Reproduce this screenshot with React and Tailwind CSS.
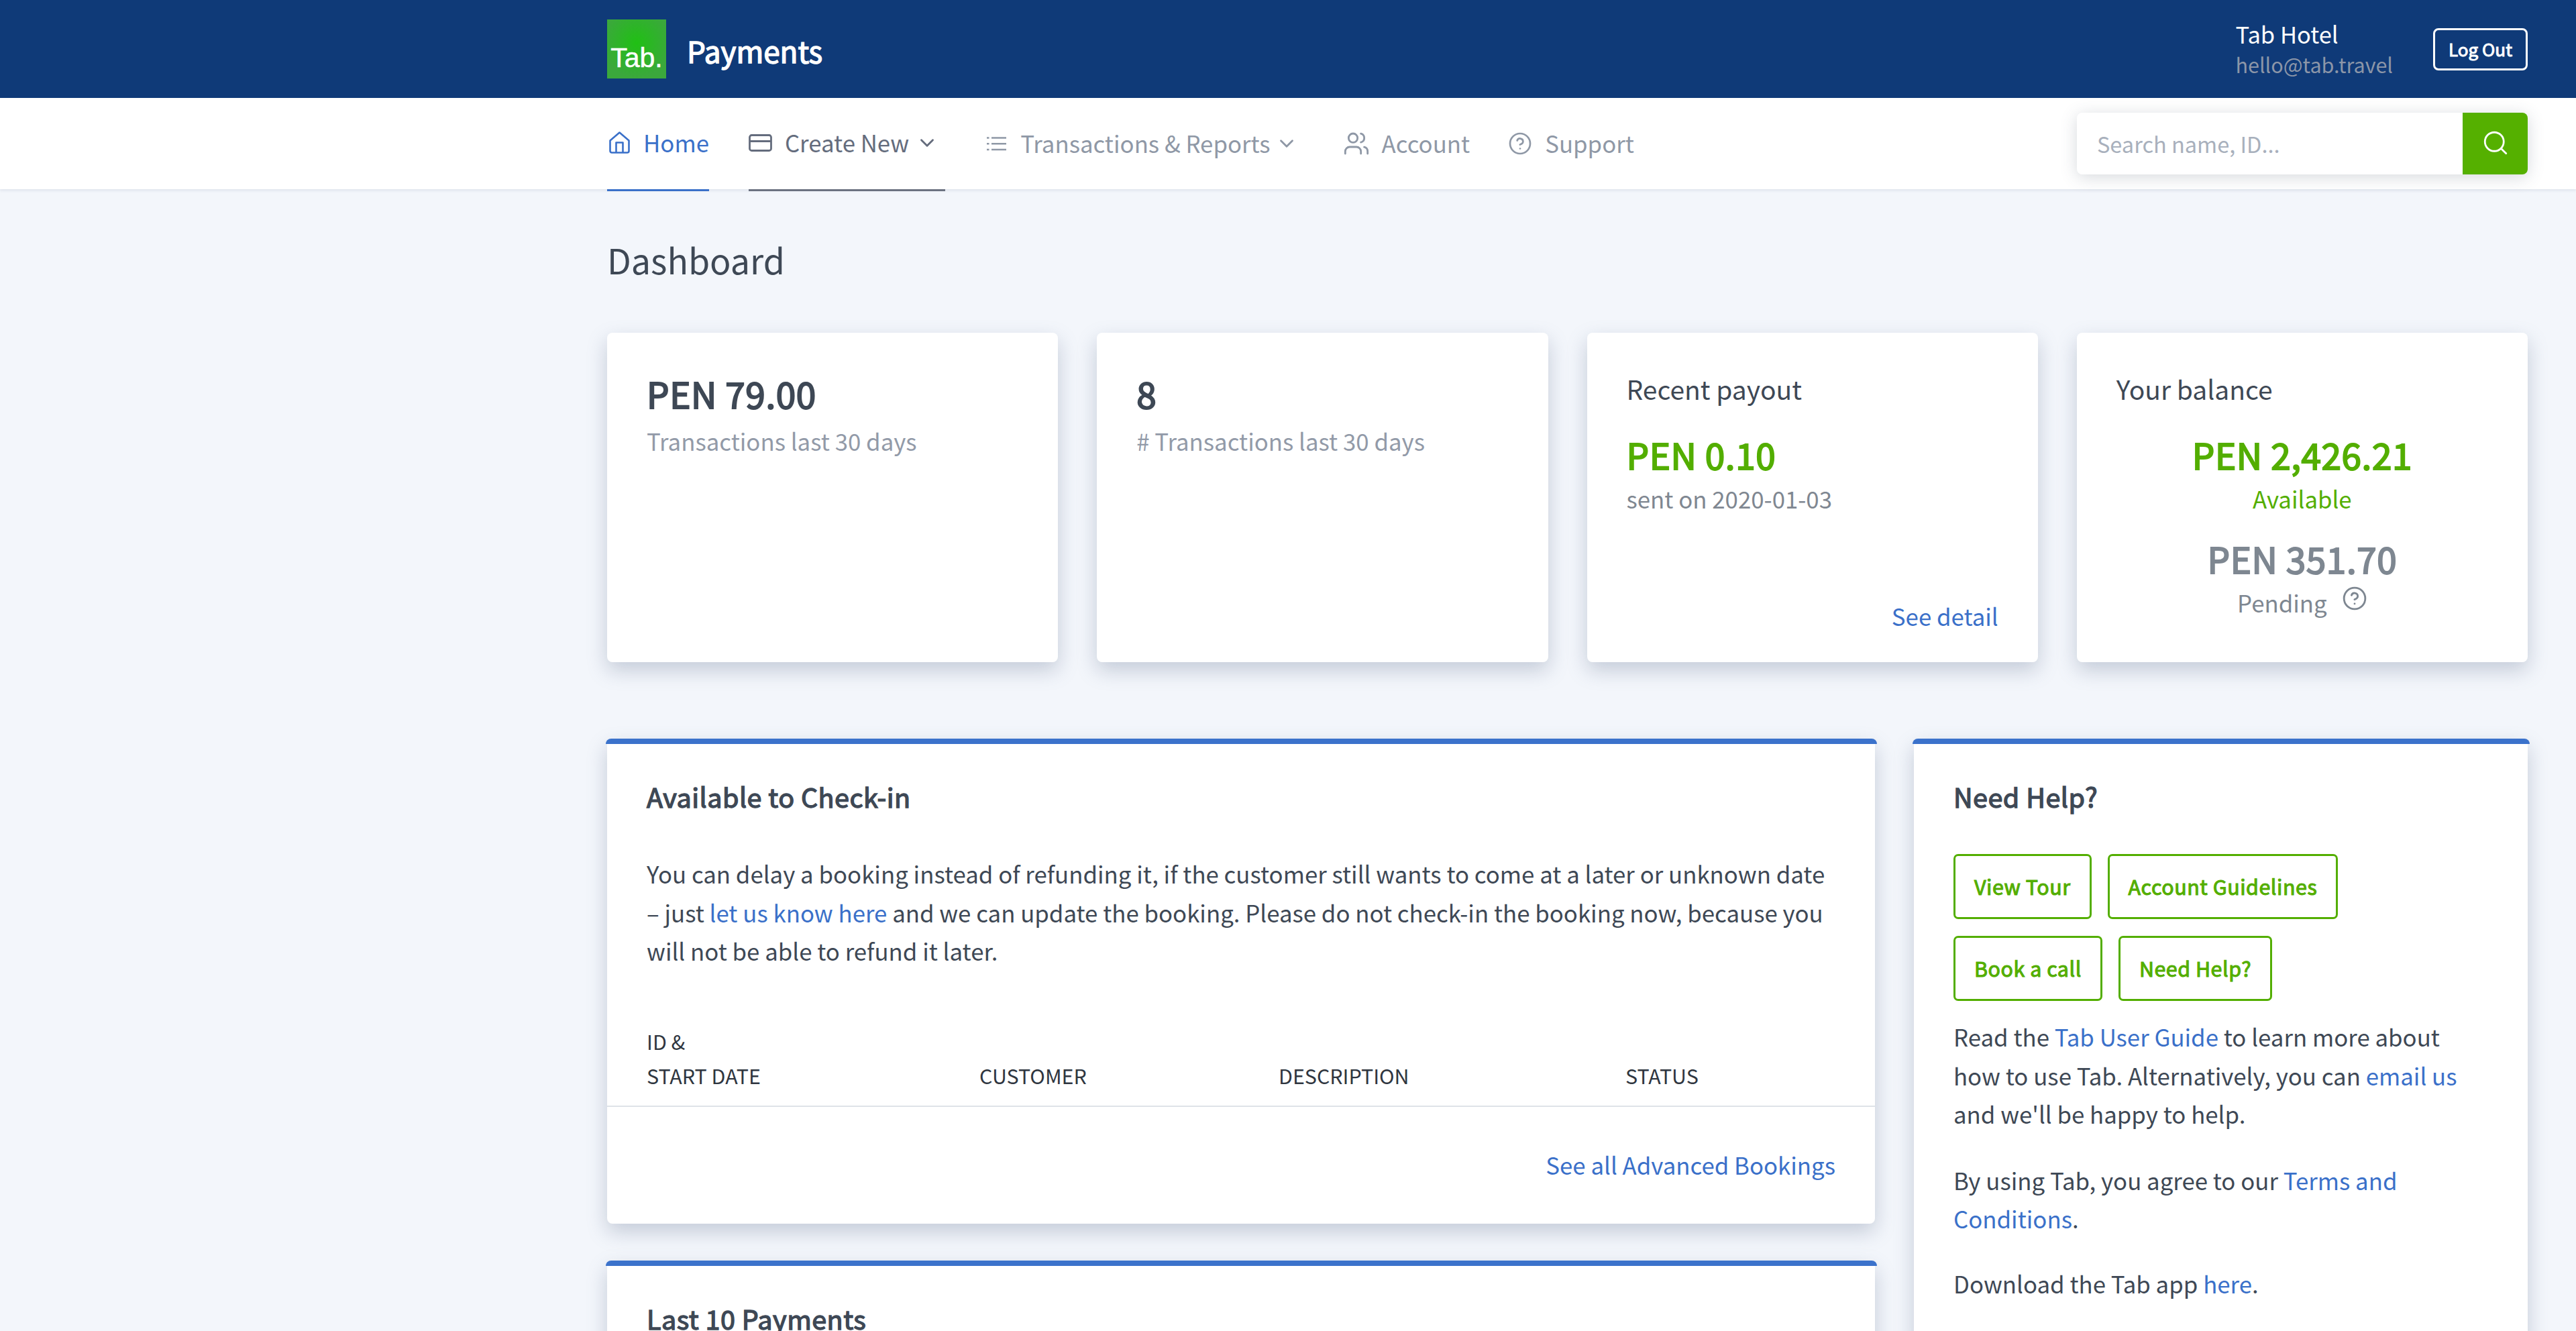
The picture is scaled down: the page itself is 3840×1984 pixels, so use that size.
import React from 'react';
import { ChevronDown, Search, Users, HelpCircle } from 'lucide-react';

function HomeIcon() {
  return (
    <svg width="31" height="33" viewBox="0 0 31 33" fill="none" stroke="currentColor" strokeWidth="2.6" strokeLinejoin="round">
      <path d="M1.5 13.5 15.5 1.5l14 12v15.5a2.5 2.5 0 0 1-2.5 2.5H4a2.5 2.5 0 0 1-2.5-2.5z" />
      <path d="M10.5 31.5V16.5h10v15" />
    </svg>
  );
}

function CardIcon() {
  return (
    <svg width="35" height="26" viewBox="0 0 35 26" fill="none" stroke="currentColor" strokeWidth="2.8">
      <rect x="1.5" y="1.5" width="32" height="23" rx="3" />
      <path d="M1.5 10.5h32" />
    </svg>
  );
}

function ListIcon() {
  return (
    <svg width="29" height="24" viewBox="0 0 29 24" fill="none" stroke="currentColor" strokeWidth="2.6">
      <path d="M7 3.5h22M7 12.2h22M7 21h22" />
      <path d="M0 3.5h3.5M0 12.2h3.5M0 21h3.5" />
    </svg>
  );
}

function NavItem({ icon, label, chevron, className }) {
  return (
    <a className={`flex h-[139px] items-center pb-[3px] ${className}`}>
      {icon}
      <span>{label}</span>
      {chevron}
    </a>
  );
}

function Panel({ title, children }) {
  return (
    <div className="relative rounded-[8px] bg-white pt-[56px] shadow-[0_12px_30px_rgba(100,115,145,0.33)]">
      <div className="absolute -inset-x-[2.5px] top-0 h-[8px] rounded-t-[8px] bg-[#3b72cb]"></div>
      <h2 className="px-[59px] text-[39.5px] leading-[60px] tracking-[0.5px] [-webkit-text-stroke:1.4px_currentColor]">{title}</h2>
      {children}
    </div>
  );
}

function OutlineButton({ children }) {
  return (
    <a className="flex h-[97px] items-center rounded-[7px] border-[3px] border-[#53ae00] px-[28px] text-[30.4px] tracking-[0.55px] text-[#53ae00] [-webkit-text-stroke:1.1px_currentColor]">
      {children}
    </a>
  );
}

function Link({ children }) {
  return <a className="text-[#3a70c9]">{children}</a>;
}

const card = 'flex h-[491px] flex-col rounded-[8px] bg-white shadow-[0_12px_30px_rgba(100,115,145,0.33)]';
const amount = 'text-[53px] leading-[72px] tracking-[0.6px] [-webkit-text-stroke:2px_currentColor]';

export default function App() {
  return (
    <div className="h-[1984px] overflow-hidden bg-[#f3f6fb] font-['Noto_Sans_CJK_SC',sans-serif] text-[34.8px] leading-[57.6px] text-[#3e4855]">
      <header className="flex h-[146px] items-center justify-between bg-[#0f3a78] pr-[72px] pl-[905px]">
        <div className="flex items-center gap-[31px]">
          <div className="flex h-[88px] w-[88px] items-end justify-center bg-[radial-gradient(circle_at_50%_40%,#20c014,#3ba83c_75%)] pb-[9px] font-['Liberation_Sans',sans-serif] text-[41px] leading-[44px] text-white [-webkit-text-stroke:0.5px_white]">
            Tab.
          </div>
          <span className="mt-[6px] text-[44px] text-white [-webkit-text-stroke:1.4px_white]">Payments</span>
        </div>
        <div className="flex items-center gap-[60px]">
          <div>
            <div className="text-[34.5px] leading-[46px] text-white">Tab Hotel</div>
            <div className="text-[30.5px] leading-[46px] text-[#8c96a8]">hello@tab.travel</div>
          </div>
          <button className="h-[63px] w-[141px] rounded-[8px] border-[3px] border-white text-[26px] leading-none text-white [-webkit-text-stroke:1px_white]">
            Log Out
          </button>
        </div>
      </header>

      <nav className="relative flex h-[136px] items-start justify-between bg-white pr-[72px] pl-[905px] shadow-[0_2px_4px_rgba(100,115,145,0.15)]">
        <div className="flex gap-[59px] text-[#8f98a6]">
          <NavItem icon={<HomeIcon />} label="Home" className="gap-[20px] border-b-[3px] border-[#3a70c9] pl-[3px] text-[#3a70c9]" />
          <NavItem
            icon={<CardIcon />}
            label="Create New"
            chevron={<ChevronDown size={34} strokeWidth={2} className="ml-[-9.5px]" />}
            className="gap-[19px] border-b-[3px] border-[#6b7280] pr-[10.5px] text-[#646c7d]"
          />
          <NavItem
            icon={<ListIcon />}
            label="Transactions & Reports"
            chevron={<ChevronDown size={34} strokeWidth={2} className="ml-[-13.5px]" />}
            className="ml-[3px] gap-[21px] pr-[10.5px]"
          />
          <NavItem icon={<Users size={40} strokeWidth={1.7} />} label="Account" className="ml-[-3px] gap-[18px]" />
          <NavItem icon={<HelpCircle size={36} strokeWidth={1.8} />} label="Support" className="ml-[-2px] gap-[19px]" />
        </div>
        <div className="mt-[22px] flex h-[92px] w-[672px] rounded-[8px] bg-white shadow-[0_4px_24px_rgba(70,80,100,0.22)]">
          <input
            placeholder="Search name, ID..."
            className="min-w-0 flex-1 pl-[30px] text-[32.5px] outline-none placeholder:text-[#a8b0bc]"
          />
          <button className="flex w-[97px] items-center justify-center rounded-r-[8px] bg-[#55b000] pb-[2px] text-white">
            <Search size={42} strokeWidth={1.6} />
          </button>
        </div>
      </nav>

      <main className="pr-[72px] pl-[905px]">
        <h1 className="pt-[69px] text-[52px] leading-[72px]">Dashboard</h1>

        <div className="mt-[73px] grid grid-cols-4 gap-[58px]">
          <div className={`${card} px-[59px] pt-[54px]`}>
            <div className={amount}>PEN 79.00</div>
            <div className="mt-[7px] text-[#929aa8]">Transactions last 30 days</div>
          </div>
          <div className={`${card} px-[59px] pt-[54px]`}>
            <div className={amount}>8</div>
            <div className="mt-[7px] text-[#929aa8]"># Transactions last 30 days</div>
          </div>
          <div className={`${card} px-[59px] pt-[56px] pb-[39px]`}>
            <div className="text-[39px] leading-[54px]">Recent payout</div>
            <div className={`${amount} mt-[35px] text-[#53ae00]`}>PEN 0.10</div>
            <div className="mt-[2px] text-[#7f8791]">sent on 2020-01-03</div>
            <div className="mt-auto text-right">
              <Link>See detail</Link>
            </div>
          </div>
          <div className={`${card} px-[59px] pt-[56px]`}>
            <div className="text-[39px] leading-[54px]">Your balance</div>
            <div className={`${amount} mt-[35px] text-center text-[#53ae00]`}>PEN 2,426.21</div>
            <div className="mt-[2px] text-center text-[#53ae00]">Available</div>
            <div className={`${amount} mt-[23.5px] text-center text-[#7e8791]`}>PEN 351.70</div>
            <div className="mt-[1.5px] flex items-start justify-center gap-[22px] text-[#7e8791]">
              <span>Pending</span>
              <HelpCircle size={38} strokeWidth={1.8} className="mt-[3px]" />
            </div>
          </div>
        </div>

        <div className="mt-[114px] grid grid-cols-[1890px_915px] gap-[58px]">
          <div className="flex flex-col gap-[55px]">
            <Panel title="Available to Check-in">
              <p className="mt-[57px] px-[59px]">
                You can delay a booking instead of refunding it, if the customer still wants to come at a later or unknown date – just <Link>let us know here</Link> and we can update the booking. Please do not check-in the booking now, because you will not be able to refund it later.
              </p>
              <div className="mt-[80px] grid grid-cols-[496px_446px_517px_1fr] items-end border-b-2 border-[#dfe3e8] pb-[19px] pl-[59px] text-[30.4px] leading-[51px] text-[#2f3640]">
                <div>ID &<br />START DATE</div>
                <div>CUSTOMER</div>
                <div>DESCRIPTION</div>
                <div>STATUS</div>
              </div>
              <div className="mt-[58px] px-[59px] pb-[59px] text-right">
                <Link>See all Advanced Bookings</Link>
              </div>
            </Panel>
            <Panel title="Last 10 Payments">
              <div className="h-[400px]"></div>
            </Panel>
          </div>

          <div>
            <Panel title="Need Help?">
              <div className="px-[59px] pb-[60px]">
                <div className="mt-[56px] flex flex-wrap gap-x-[24px] gap-y-[25px]">
                  <OutlineButton>View Tour</OutlineButton>
                  <OutlineButton>Account Guidelines</OutlineButton>
                  <OutlineButton>Book a call</OutlineButton>
                  <OutlineButton>Need Help?</OutlineButton>
                </div>
                <p className="mt-[25px]">
                  Read the <Link>Tab User Guide</Link> to learn more about how to use Tab. Alternatively, you can <Link>email us</Link> and we'll be happy to help.
                </p>
                <p className="mt-[41px]">
                  By using Tab, you agree to our <Link>Terms and Conditions</Link>.
                </p>
                <p className="mt-[39px]">
                  Download the Tab app <Link>here</Link>.
                </p>
              </div>
            </Panel>
          </div>
        </div>
      </main>
    </div>
  );
}
